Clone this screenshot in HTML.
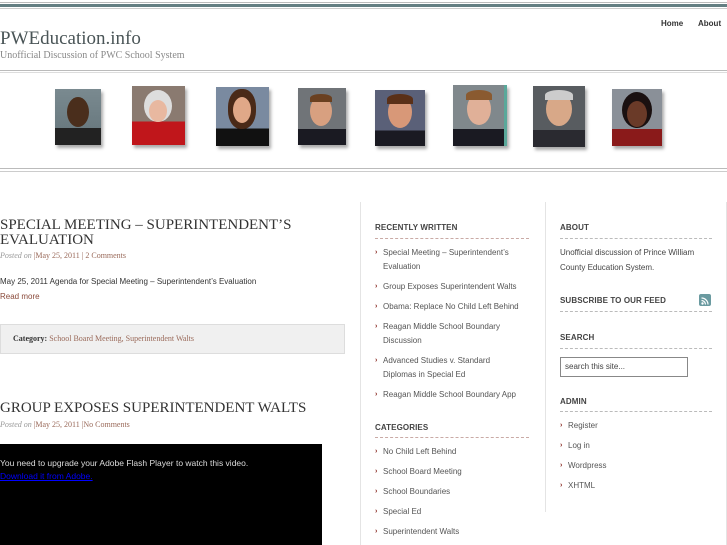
<!DOCTYPE html>
<html><head><meta charset="utf-8"><style>
*{margin:0;padding:0;box-sizing:border-box}
body{width:727px;height:545px;overflow:hidden;background:#fff;font-family:"Liberation Sans",sans-serif;position:relative}
.a{position:absolute}
.serif{font-family:"Liberation Serif",serif}
.hd{font-size:8px;font-weight:bold;color:#444;letter-spacing:.1px}
.dash{border-bottom:1px dashed #c9aaa5;height:0}
.dash2{border-bottom:1px dashed #bbb;height:0}
.li{font-size:8px;color:#555;line-height:14px}
.li b{color:#8a2a22;font-weight:bold;position:absolute;left:-8px;font-size:7px}
.ph{position:absolute;box-shadow:2px 3px 3px #aaa;overflow:hidden}
</style></head><body>
<div class="a" style="left:0;top:2px;width:727px;height:1px;background:#bbb"></div>
<div class="a" style="left:0;top:4px;width:727px;height:3px;background:#637e82"></div>
<div class="a" style="left:0;top:8px;width:727px;height:1px;background:#ccc"></div>
<div class="a serif" style="left:0;top:28px;font-size:19px;color:#4a5557">PWEducation.info</div>
<div class="a serif" style="left:0;top:50px;font-size:10px;color:#888">Unofficial Discussion of PWC School System</div>
<div class="a" style="left:661px;top:19px;font-size:8px;font-weight:bold;color:#333">Home</div>
<div class="a" style="left:698px;top:19px;font-size:8px;font-weight:bold;color:#333">About</div>
<div class="a" style="left:0;top:70px;width:727px;height:1px;background:#bbb"></div>
<div class="a" style="left:0;top:72px;width:727px;height:1px;background:#ddd"></div>

<div class="ph" style="left:55px;top:89px;width:46px;height:56px;background:linear-gradient(#7a8a90 0,#6a7a80 70%,#222 70%)"><div class="a" style="left:12px;top:8px;width:22px;height:30px;border-radius:50%;background:#4a2e1c"></div></div>
<div class="ph" style="left:132px;top:86px;width:53px;height:59px;background:linear-gradient(#8a7a70 0,#8a7a70 60%,#c0161b 60%)"><div class="a" style="left:12px;top:4px;width:28px;height:32px;border-radius:50%;background:#ddd"></div><div class="a" style="left:17px;top:14px;width:18px;height:22px;border-radius:50%;background:#e8b8a0"></div></div>
<div class="ph" style="left:216px;top:87px;width:53px;height:59px;background:linear-gradient(#7a8aa0 0,#7a8aa0 70%,#111 70%)"><div class="a" style="left:12px;top:2px;width:28px;height:40px;border-radius:45%;background:#4a2a18"></div><div class="a" style="left:17px;top:10px;width:18px;height:26px;border-radius:50%;background:#e0a888"></div></div>
<div class="ph" style="left:298px;top:88px;width:48px;height:57px;background:linear-gradient(#707478 0,#707478 72%,#1a1a22 72%)"><div class="a" style="left:12px;top:8px;width:22px;height:30px;border-radius:50%;background:#d8a080"></div><div class="a" style="left:12px;top:6px;width:22px;height:8px;border-radius:50% 50% 0 0;background:#6a4020"></div></div>
<div class="ph" style="left:375px;top:90px;width:50px;height:56px;background:linear-gradient(#5a6078 0,#5a6078 72%,#1a1a22 72%)"><div class="a" style="left:13px;top:6px;width:24px;height:32px;border-radius:50%;background:#d89878"></div><div class="a" style="left:12px;top:4px;width:26px;height:10px;border-radius:50% 50% 0 0;background:#5a3018"></div></div>
<div class="ph" style="left:453px;top:85px;width:54px;height:61px;background:linear-gradient(#80888c 0,#80888c 72%,#1a1a22 72%);border-right:3px solid #5aa89a"><div class="a" style="left:14px;top:8px;width:24px;height:32px;border-radius:50%;background:#e0b098"></div><div class="a" style="left:13px;top:5px;width:26px;height:10px;border-radius:50% 50% 0 0;background:#8a5a30"></div></div>
<div class="ph" style="left:533px;top:86px;width:52px;height:61px;background:linear-gradient(#585c60 0,#585c60 72%,#2a2a30 72%)"><div class="a" style="left:13px;top:6px;width:26px;height:34px;border-radius:50%;background:#d8a888"></div><div class="a" style="left:12px;top:4px;width:28px;height:10px;border-radius:50% 50% 0 0;background:#ccc"></div></div>
<div class="ph" style="left:612px;top:89px;width:50px;height:57px;background:linear-gradient(#8a9098 0,#8a9098 70%,#8a1a1a 70%)"><div class="a" style="left:10px;top:3px;width:30px;height:36px;border-radius:50%;background:#1a1010"></div><div class="a" style="left:15px;top:12px;width:20px;height:26px;border-radius:50%;background:#6a3a28"></div></div>

<div class="a" style="left:0;top:168px;width:727px;height:1px;background:#bbb"></div>
<div class="a" style="left:0;top:171px;width:727px;height:1px;background:#ccc"></div>

<div class="a serif" style="left:0;top:218px;font-size:15px;line-height:14.5px;color:#333;width:330px">SPECIAL MEETING – SUPERINTENDENT’S EVALUATION</div>
<div class="a serif" style="left:0;top:251px;font-size:8px;color:#9a6a5a"><i style="color:#999">Posted on</i> |May 25, 2011 | 2 Comments</div>
<div class="a" style="left:0;top:277px;font-size:8px;color:#333">May 25, 2011 Agenda for Special Meeting – Superintendent’s Evaluation</div>
<div class="a" style="left:0;top:292px;font-size:8px;color:#8a4a3a">Read more</div>
<div class="a serif" style="left:0;top:324px;width:345px;height:30px;background:#f0f0f0;border:1px solid #ddd;font-size:8px;padding:9px 12px;color:#9a6a5a"><b style="color:#333">Category:</b> School Board Meeting, Superintendent Walts</div>
<div class="a serif" style="left:0;top:400px;font-size:15px;color:#333">GROUP EXPOSES SUPERINTENDENT WALTS</div>
<div class="a serif" style="left:0;top:420px;font-size:8px;color:#9a6a5a"><i style="color:#999">Posted on</i> |May 25, 2011 |No Comments</div>
<div class="a" style="left:0;top:444px;width:322px;height:101px;background:#000;font-size:8.5px;color:#ddd;padding-top:13px;line-height:12.5px">You need to upgrade your Adobe Flash Player to watch this video.<br><span style="color:#00f;text-decoration:underline">Download it from Adobe.</span></div>

<div class="a" style="left:360px;top:202px;width:1px;height:343px;background:#e4e4e4"></div>
<div class="a" style="left:545px;top:202px;width:1px;height:310px;background:#e4e4e4"></div>
<div class="a" style="left:726px;top:202px;width:1px;height:343px;background:#e4e4e4"></div>

<div class="a hd" style="left:375px;top:223px">RECENTLY WRITTEN</div>
<div class="a dash" style="left:375px;top:238px;width:154px"></div>
<div class="a" style="left:383px;top:246px;width:140px">
<div class="li" style="position:relative;margin-bottom:6px"><b>›</b>Special Meeting – Superintendent’s Evaluation</div>
<div class="li" style="position:relative;margin-bottom:6px"><b>›</b>Group Exposes Superintendent Walts</div>
<div class="li" style="position:relative;margin-bottom:6px"><b>›</b>Obama: Replace No Child Left Behind</div>
<div class="li" style="position:relative;margin-bottom:6px"><b>›</b>Reagan Middle School Boundary Discussion</div>
<div class="li" style="position:relative;margin-bottom:6px"><b>›</b>Advanced Studies v. Standard Diplomas in Special Ed</div>
<div class="li" style="position:relative;white-space:nowrap"><b>›</b>Reagan Middle School Boundary App</div>
</div>
<div class="a hd" style="left:375px;top:423px">CATEGORIES</div>
<div class="a dash" style="left:375px;top:437px;width:154px"></div>
<div class="a" style="left:383px;top:445px;width:150px">
<div class="li" style="position:relative;margin-bottom:6px"><b>›</b>No Child Left Behind</div>
<div class="li" style="position:relative;margin-bottom:6px"><b>›</b>School Board Meeting</div>
<div class="li" style="position:relative;margin-bottom:6px"><b>›</b>School Boundaries</div>
<div class="li" style="position:relative;margin-bottom:6px"><b>›</b>Special Ed</div>
<div class="li" style="position:relative"><b>›</b>Superintendent Walts</div>
</div>

<div class="a hd" style="left:560px;top:223px">ABOUT</div>
<div class="a dash2" style="left:560px;top:238px;width:152px"></div>
<div class="a li" style="left:560px;top:245px;width:150px;line-height:15px;color:#444">Unofficial discussion of Prince William County Education System.</div>
<div class="a hd" style="left:560px;top:296px">SUBSCRIBE TO OUR FEED</div>
<div class="a" style="left:699px;top:294px;width:12px;height:12px;background:#6a9aa0;border-radius:2px"><svg width="12" height="12"><circle cx="3.5" cy="8.5" r="1.2" fill="#fff"/><path d="M2.5 5.5a4 4 0 0 1 4 4M2.5 3a6.5 6.5 0 0 1 6.5 6.5" stroke="#fff" stroke-width="1.2" fill="none"/></svg></div>
<div class="a dash2" style="left:560px;top:311px;width:152px"></div>
<div class="a hd" style="left:560px;top:333px">SEARCH</div>
<div class="a dash2" style="left:560px;top:348px;width:152px"></div>
<div class="a" style="left:560px;top:357px;width:128px;height:20px;border:1px solid #888;font-size:8px;color:#444;padding:4px 4px">search this site...</div>
<div class="a hd" style="left:560px;top:397px">ADMIN</div>
<div class="a dash2" style="left:560px;top:411px;width:152px"></div>
<div class="a" style="left:568px;top:419px;width:140px">
<div class="li" style="position:relative;margin-bottom:6px"><b>›</b>Register</div>
<div class="li" style="position:relative;margin-bottom:6px"><b>›</b>Log in</div>
<div class="li" style="position:relative;margin-bottom:6px"><b>›</b>Wordpress</div>
<div class="li" style="position:relative"><b>›</b>XHTML</div>
</div>
</body></html>
